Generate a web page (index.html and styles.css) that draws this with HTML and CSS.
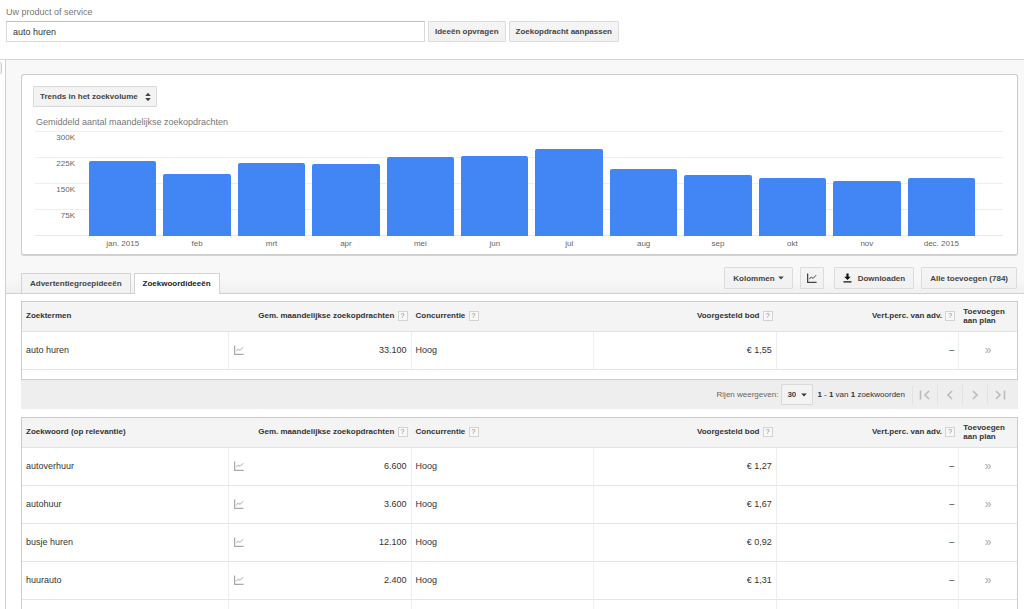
FILE: index.html
```html
<!DOCTYPE html>
<html lang="nl">
<head>
    <meta charset="UTF-8">
    <meta name="viewport" content="width=device-width, initial-scale=1.0">
    <title>Zoekwoordplanner</title>
    <link rel="stylesheet" href="styles.css">
</head>
<body>

    <svg class="sprite" aria-hidden="true">
        <symbol id="icon-trend" viewBox="0 0 10 10">
            <path d="M.6 .5v8.9h9" fill="none" stroke="currentColor" stroke-width="1.3"/>
            <path d="M2.3 6.2l2-2.2 1.8 1.4 3-3.2" fill="none" stroke="currentColor"/>
        </symbol>
        <symbol id="icon-caret" viewBox="0 0 6 4">
            <path d="M.2 .6h5.6L3 3.6z" fill="currentColor"/>
        </symbol>
    </svg>

    <form class="search">
        <label for="product">Uw product of service</label>
        <div class="search-row">
            <input type="text" id="product" value="auto huren">
            <button type="button" class="btn">Ideeën opvragen</button>
            <button type="button" class="btn">Zoekopdracht aanpassen</button>
        </div>
    </form>

    <div class="layout">
        <aside class="rail">
            <button type="button" class="rail-handle" aria-label="Paneel openen"></button>
        </aside>

        <main class="content">
            <div class="top">
                <!-- Grafiek -->
                <section class="card">
                    <div class="select-wrap trend-select">
                        <select aria-label="Soort grafiek">
                            <option>Trends in het zoekvolume</option>
                        </select>
                        <svg class="updown" viewBox="0 0 6 9"><path d="M3 .3L5.8 3.4H.2zM3 8.7L.2 5.6h5.6z" fill="#444"/></svg>
                    </div>
                    <h2>Gemiddeld aantal maandelijkse zoekopdrachten</h2>
                    <div class="chart">
                        <div class="grid">
                            <span>300K</span>
                            <span>225K</span>
                            <span>150K</span>
                            <span>75K</span>
                        </div>
                        <div class="bars">
                            <div class="bar" style="height: 71%"></div>
                            <div class="bar" style="height: 59%"></div>
                            <div class="bar" style="height: 70%"></div>
                            <div class="bar" style="height: 69%"></div>
                            <div class="bar" style="height: 75%"></div>
                            <div class="bar" style="height: 76%"></div>
                            <div class="bar" style="height: 83%"></div>
                            <div class="bar" style="height: 64%"></div>
                            <div class="bar" style="height: 58%"></div>
                            <div class="bar" style="height: 55%"></div>
                            <div class="bar" style="height: 52%"></div>
                            <div class="bar" style="height: 55%"></div>
                        </div>
                        <div class="months">
                            <span>jan. 2015</span>
                            <span>feb</span>
                            <span>mrt</span>
                            <span>apr</span>
                            <span>mei</span>
                            <span>jun</span>
                            <span>jul</span>
                            <span>aug</span>
                            <span>sep</span>
                            <span>okt</span>
                            <span>nov</span>
                            <span>dec. 2015</span>
                        </div>
                    </div>
                </section>

                <!-- Tabs en acties -->
                <div class="toolbar">
                    <nav class="tabs">
                        <a href="#" class="tab">Advertentiegroepideeën</a>
                        <a href="#" class="tab active">Zoekwoordideeën</a>
                    </nav>
                    <div class="actions">
                        <button type="button" class="btn">Kolommen <svg class="caret"><use href="#icon-caret"/></svg></button>
                        <button type="button" class="btn btn-icon" aria-label="Grafiek"><svg class="trend"><use href="#icon-trend"/></svg></button>
                        <button type="button" class="btn btn-download"><svg class="download" viewBox="0 0 9 10"><path d="M3.4 .5h2.2v3.2h2.2L4.5 7 1.2 3.7h2.2zM.5 8.3h8v1.2h-8z" fill="#111"/></svg>Downloaden</button>
                        <button type="button" class="btn">Alle toevoegen (784)</button>
                    </div>
                </div>
            </div>

            <div class="results">
                <div class="table-box terms">
                    <table>
                        <thead>
                            <tr>
                                <th class="col-word">Zoektermen</th>
                                <th class="col num">Gem. maandelijkse zoekopdrachten <button type="button" class="help">?</button></th>
                                <th class="col">Concurrentie <button type="button" class="help">?</button></th>
                                <th class="col num">Voorgesteld bod <button type="button" class="help">?</button></th>
                                <th class="col num">Vert.perc. van adv. <button type="button" class="help">?</button></th>
                                <th class="col-add">Toevoegen aan plan</th>
                            </tr>
                        </thead>
                        <tbody>
                            <tr>
                                <td>auto huren</td>
                                <td><div class="volume"><svg class="trend"><use href="#icon-trend"/></svg>33.100</div></td>
                                <td>Hoog</td>
                                <td class="num">€ 1,55</td>
                                <td class="num">–</td>
                                <td class="add"><button type="button">»</button></td>
                            </tr>
                        </tbody>
                    </table>
                </div>

                <div class="pager">
                    <label for="rows">Rijen weergeven:</label>
                    <div class="select-wrap rows-select">
                        <select id="rows">
                            <option>30</option>
                        </select>
                        <svg class="caret"><use href="#icon-caret"/></svg>
                    </div>
                    <span class="range"><b>1</b> - <b>1</b> van <b>1</b> zoekwoorden</span>
                    <button type="button" aria-label="Eerste pagina"><svg viewBox="0 0 12 10"><path d="M1.5 .5v9M10 1L6 5l4 4"/></svg></button>
                    <button type="button" aria-label="Vorige pagina"><svg viewBox="0 0 12 10"><path d="M8 1L4 5l4 4"/></svg></button>
                    <button type="button" aria-label="Volgende pagina"><svg viewBox="0 0 12 10"><path d="M4 1l4 4-4 4"/></svg></button>
                    <button type="button" aria-label="Laatste pagina"><svg viewBox="0 0 12 10"><path d="M2 1l4 4-4 4M10.5 .5v9"/></svg></button>
                </div>

                <div class="table-box">
                    <table>
                        <thead>
                            <tr>
                                <th class="col-word">Zoekwoord (op relevantie)</th>
                                <th class="col num">Gem. maandelijkse zoekopdrachten <button type="button" class="help">?</button></th>
                                <th class="col">Concurrentie <button type="button" class="help">?</button></th>
                                <th class="col num">Voorgesteld bod <button type="button" class="help">?</button></th>
                                <th class="col num">Vert.perc. van adv. <button type="button" class="help">?</button></th>
                                <th class="col-add">Toevoegen aan plan</th>
                            </tr>
                        </thead>
                        <tbody>
                            <tr>
                                <td>autoverhuur</td>
                                <td><div class="volume"><svg class="trend"><use href="#icon-trend"/></svg>6.600</div></td>
                                <td>Hoog</td>
                                <td class="num">€ 1,27</td>
                                <td class="num">–</td>
                                <td class="add"><button type="button">»</button></td>
                            </tr>
                            <tr>
                                <td>autohuur</td>
                                <td><div class="volume"><svg class="trend"><use href="#icon-trend"/></svg>3.600</div></td>
                                <td>Hoog</td>
                                <td class="num">€ 1,67</td>
                                <td class="num">–</td>
                                <td class="add"><button type="button">»</button></td>
                            </tr>
                            <tr>
                                <td>busje huren</td>
                                <td><div class="volume"><svg class="trend"><use href="#icon-trend"/></svg>12.100</div></td>
                                <td>Hoog</td>
                                <td class="num">€ 0,92</td>
                                <td class="num">–</td>
                                <td class="add"><button type="button">»</button></td>
                            </tr>
                            <tr>
                                <td>huurauto</td>
                                <td><div class="volume"><svg class="trend"><use href="#icon-trend"/></svg>2.400</div></td>
                                <td>Hoog</td>
                                <td class="num">€ 1,31</td>
                                <td class="num">–</td>
                                <td class="add"><button type="button">»</button></td>
                            </tr>
                            <tr>
                                <td></td>
                                <td></td>
                                <td></td>
                                <td></td>
                                <td></td>
                                <td></td>
                            </tr>
                        </tbody>
                    </table>
                </div>
            </div>
        </main>
    </div>

</body>
</html>
```
FILE: styles.css
```css
* {
    box-sizing: border-box;
}
body {
    display: flex;
    flex-direction: column;
    height: 100vh;
    margin: 0;
    overflow: hidden;
    background: #fff;
    color: #333;
    font-family: "Liberation Sans", Arial, sans-serif;
    font-size: 9px;
    line-height: 12px;
}
button, input, select {
    font-family: inherit;
    color: inherit;
}
button, select {
    cursor: pointer;
}
svg {
    display: block;
    flex: none;
}
.sprite {
    position: absolute;
    width: 0;
    height: 0;
}

/* Zoekbalk */
.search {
    padding: 6px 6px 17px;
    border-bottom: 1px solid #d6d6d6;
}
.search label {
    display: block;
    margin-bottom: 3px;
    color: #777;
}
.search-row {
    display: flex;
    gap: 3px;
}
.search input {
    width: 41.4%;
    height: 21px;
    padding: 0 6px;
    border: 1px solid #d9d9d9;
    border-top-color: #c0c0c0;
    font-size: 9px;
}
.btn {
    display: flex;
    align-items: center;
    justify-content: center;
    gap: 3px;
    height: 21px;
    padding: 0 6px;
    border: 1px solid #dcdcdc;
    border-radius: 1px;
    background: linear-gradient(#f5f5f5, #f1f1f1);
    color: #444;
    font-size: 8px;
    font-weight: bold;
    white-space: nowrap;
}

.layout {
    display: flex;
    flex: 1;
    min-height: 0;
    overflow: hidden;
}
.rail {
    flex: none;
    width: 6px;
    padding-top: 2px;
    border-right: 1px solid #d0d0d0;
}
.rail-handle {
    display: block;
    width: 2px;
    height: 12px;
    padding: 0;
    border: 1px solid #ccc;
    border-left: 0;
    border-radius: 0 2px 2px 0;
    background: #f1f1f1;
}
.content {
    flex: 1;
    min-width: 0;
}
.top {
    padding: 14px 6px 0 15px;
    border-bottom: 1px solid #d0d0d0;
    background: linear-gradient(#f8f8f8 94%, #f0f0f0);
}

/* Grafiek */
.card {
    padding: 11px 14px 4px 11px;
    border: 1px solid #ccc;
    border-bottom: 2px solid #d0d0d0;
    border-radius: 3px;
    background: #fff;
}
.select-wrap {
    position: relative;
    width: fit-content;
}
.select-wrap select {
    display: block;
    height: 21px;
    border: 1px solid #d9d9d9;
    border-radius: 1px;
    background: #f3f3f3;
    color: #444;
    font-size: 8px;
    font-weight: bold;
    appearance: none;
}
.select-wrap svg {
    position: absolute;
    top: 50%;
    right: 6px;
    transform: translateY(-50%);
    pointer-events: none;
}
.trend-select select {
    padding: 0 18px 0 6px;
}
.updown {
    width: 6px;
    height: 9px;
}
.card h2 {
    margin: 9px 0 3px 3px;
    color: #777;
    font-size: 9px;
    font-weight: normal;
}
.chart {
    display: grid;
    grid-template-rows: 105px auto;
    margin-left: 2px;
    color: #666;
    font-size: 8px;
}
.grid {
    display: grid;
    grid-area: 1 / 1;
    grid-template-rows: repeat(4, 1fr);
    border-bottom: 1px solid #e8e8e8;
}
.grid span {
    border-top: 1px solid #eee;
}
/* de tekst lijnt rechts uit, links van de eerste balk */
.grid span::first-line {
    line-height: 12px;
}
.grid span {
    padding-right: calc(100% - 40px);
    text-align: right;
}
.bars, .months {
    display: grid;
    grid-template-columns: repeat(12, minmax(0, 1fr));
    column-gap: 7px;
    padding: 0 28px 0 54px;
}
.bars {
    grid-area: 1 / 1;
    align-items: end;
}
.bar {
    border-radius: 2px 2px 0 0;
    background: #4285f4;
}
.months {
    padding-top: 2px;
    text-align: center;
}

/* Tabs en acties */
.toolbar {
    display: flex;
    align-items: flex-end;
    justify-content: space-between;
    padding-top: 11px;
}
.tabs {
    display: flex;
    gap: 3px;
}
.tab {
    height: 20px;
    padding: 0 8px;
    border: 1px solid #d3d3d3;
    border-bottom: 0;
    background: #f3f3f3;
    color: #444;
    font-size: 8px;
    font-weight: bold;
    line-height: 19px;
    text-decoration: none;
}
.tab.active {
    height: 21px;
    margin-bottom: -1px;
    background: #fff;
    color: #222;
}
.actions {
    display: flex;
    gap: 7px;
    padding: 0 1px 4px 0;
}
.actions .btn {
    height: 22px;
    padding: 0 8px;
}
.actions .btn-icon {
    padding: 0 6px;
}
.actions .btn-download {
    gap: 6px;
    margin-left: 3px;
}
.caret {
    width: 6px;
    height: 4px;
}
.trend {
    width: 10px;
    height: 10px;
}
.download {
    width: 9px;
    height: 10px;
}

/* Tabellen */
.results {
    padding: 7px 6px 0 15px;
}
.table-box {
    border: 1px solid #ccc;
}
.terms {
    padding-bottom: 9px;
}
table {
    width: 100%;
    border-spacing: 0;
    table-layout: fixed;
}
th {
    height: 30px;
    padding: 0 4px 2px;
    border-bottom: 1px solid #e3e3e3;
    background: #f4f4f4;
    font-size: 8px;
    line-height: 9px;
    text-align: left;
    white-space: nowrap;
}
td {
    height: 38px;
    padding: 0 4px 2px;
    border-right: 1px solid #eee;
    border-bottom: 1px solid #e5e5e5;
}
td:last-child {
    border-right: 0;
}
.col-word {
    width: 20.8%;
}
.col {
    width: 18.35%;
}
.col-add {
    white-space: normal;
}
.num {
    text-align: right;
}
.help {
    width: 10px;
    height: 10px;
    margin-left: 1px;
    padding: 0;
    border: 1px solid #d3d3d3;
    background: #f8f8f8;
    color: #888;
    font-size: 7px;
    line-height: 8px;
    vertical-align: middle;
}
.volume {
    display: flex;
    align-items: center;
    justify-content: space-between;
}
.volume .trend {
    margin-left: 1px;
    color: #aaa;
}
.add {
    text-align: center;
}
.add button {
    padding: 0;
    border: 0;
    background: none;
    color: #aaa;
    font-size: 12px;
}

/* Paginering */
.pager {
    display: flex;
    align-items: center;
    justify-content: flex-end;
    height: 29px;
    margin-bottom: 8px;
    padding-right: 6px;
    background: #eee;
    font-size: 8px;
}
.pager label {
    margin-right: 3px;
    color: #666;
}
.rows-select select {
    padding: 0 16px 0 5px;
}
.range {
    margin: 0 7px 0 4px;
}
.pager > button {
    width: 25px;
    height: 20px;
    padding: 0 6px;
    border: 0;
    border-left: 1px solid #e2e2e2;
    background: none;
}
.pager > button svg {
    width: 12px;
    height: 10px;
    fill: none;
    stroke: #bbb;
    stroke-width: 1.6;
}
```
